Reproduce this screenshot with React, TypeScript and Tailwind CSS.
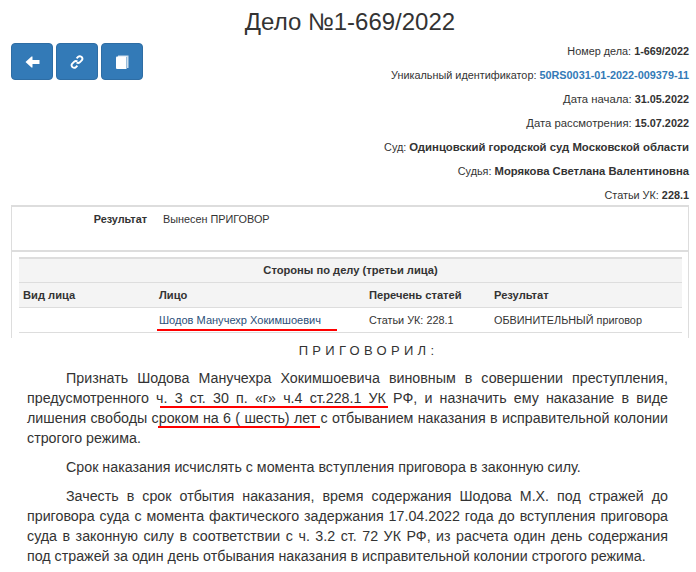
import React from "react";

const Info = ({ label, value, blue, labelClass, valueClass }: { label: string; value: string; blue?: boolean; labelClass?: string; valueClass?: string }) => (
  <div className="h-6 leading-6 text-right">
    <span className={labelClass}>{label}:</span> <b className={(blue ? "text-[#337ab7] " : "text-[#333] ") + (valueClass ?? "")}>{value}</b>
  </div>
);

const Btn = ({ children }: { children: React.ReactNode }) => (
  <div className="w-[42px] h-[37px] rounded bg-[#337ab7] border border-[#2e6da4] flex items-center justify-center text-white text-sm">
    {children}
  </div>
);

const Red = ({ className }: { className: string }) => (
  <div className={"absolute h-[2px] bg-[#f00] " + className} />
);

export default function App() {
  return (
    <div className="relative w-[696px] h-[572px] overflow-hidden bg-white text-[#333] font-['Liberation_Sans',Arial,sans-serif]">
      <h1 className="h-[43px] pt-[5px] pl-[4px] text-center text-2xl leading-[33px] font-normal">Дело №1-669/2022</h1>
      <div className="flex justify-between pl-[11px] pr-[7px] text-[10.85px] text-[#333]">
        <div className="flex gap-[3px] h-[37px]">
          <Btn>
            <svg width="15" height="14" viewBox="0 0 15 14" fill="#fff">
              <path d="M0.5 7 L6.5 1.5 L7.5 1.5 L7.5 5 L14.5 5 L14.5 9 L7.5 9 L7.5 12.5 L6.5 12.5 Z" />
            </svg>
          </Btn>
          <Btn>
            <svg width="14" height="14" viewBox="0 0 14 14" fill="none" stroke="#fff" strokeWidth="1.9">
              <path d="M6.6 3.4 L8.2 1.8 Q9.6 0.6 11.4 1.7 Q13.2 3.4 11.9 5.2 L9.8 7.3 Q8.2 8.6 6.6 7.4" />
              <path d="M7.4 10.6 L5.8 12.2 Q4.4 13.4 2.6 12.3 Q0.8 10.6 2.1 8.8 L4.2 6.7 Q5.8 5.4 7.4 6.6" />
            </svg>
          </Btn>
          <Btn>
            <svg width="14" height="14" viewBox="0 0 14 14">
              <path d="M3 0.5h10.5v12.5h-1.5v-11h-9z" fill="#cfdfee" />
              <path d="M1 2.5q0-1 1-1h9.5v12.5h-9.5q-1 0-1-1z" fill="#fff" />
            </svg>
          </Btn>
        </div>
        <div className="-mt-[4px]">
          <Info label="Номер дела" value="1-669/2022" />
          <Info label="Уникальный идентификатор" value="50RS0031-01-2022-009379-11" blue />
          <Info label="Дата начала" value="31.05.2022" labelClass="text-[11.3px]" />
          <Info label="Дата рассмотрения" value="15.07.2022" labelClass="text-[11.3px]" />
          <Info label="Суд" value="Одинцовский городской суд Московской области" valueClass="text-[11.35px]" />
          <Info label="Судья" value="Морякова Светлана Валентиновна" valueClass="text-[11.25px]" />
          <Info label="Статьи УК" value="228.1" />
        </div>
      </div>
      <div className="mx-[11px] w-[678px] h-[133px] -mt-[2px] border-x border-t-2 border-x-[#ddd] border-t-[#ddd] text-[10.85px] overflow-hidden">
        <div className="h-[45px] flex border-b-2 border-[#ddd] pt-[4px]">
          <b className="w-[135px] text-right">Результат</b>
          <span className="ml-[16px]">Вынесен ПРИГОВОР</span>
        </div>
        <div className="mx-[7px] mt-[5px] w-[663px] border-t-2 border-[#ddd]">
          <div className="h-[24px] bg-[#f4f4f4] border-b border-[#ddd] text-center font-bold text-[11.15px] leading-[22px]">Стороны по делу (третьи лица)</div>
          <div className="h-[25px] bg-[#f4f4f4] border-b border-[#ddd] flex font-bold text-[11.15px] leading-[24px]">
            <span className="w-[140px] pl-[4px]">Вид лица</span>
            <span className="w-[210px]">Лицо</span>
            <span className="w-[125px]">Перечень статей</span>
            <span>Результат</span>
          </div>
          <div className="h-[25px] border-b border-[#ddd] flex leading-[24px]">
            <span className="w-[140px]" />
            <span className="w-[210px] text-[11.05px] text-[#2b4f7a]">Шодов Манучехр Хокимшоевич</span>
            <span className="w-[125px]">Статьи УК: 228.1</span>
            <span>ОБВИНИТЕЛЬНЫЙ приговор</span>
          </div>
        </div>
      </div>
      <div className="w-[641px] ml-[27px] text-[14.25px] leading-[20px] text-[#333]">
        <p className="h-[30px] pt-[3px] pl-[42px] text-center tracking-[4.3px] leading-[20px] text-[13px]">ПРИГОВОРИЛ:</p>
        <p className="text-justify indent-[39px]">
          Признать Шодова Манучехра Хокимшоевича виновным в совершении преступления, предусмотренного ч. 3 ст. 30 п. «г» ч.4 ст.228.1 УК РФ, и назначить ему наказание в виде лишения свободы сроком на 6 ( шесть) лет с отбыванием наказания в исправительной колонии строгого режима.
        </p>
        <p className="mt-[9px] text-justify indent-[39px]">Срок наказания исчислять с момента вступления приговора в законную силу.</p>
        <p className="mt-[9px] text-justify indent-[39px]">
          Зачесть в срок отбытия наказания, время содержания Шодова М.Х. под стражей до приговора суда с момента фактического задержания 17.04.2022 года до вступления приговора суда в законную силу в соответствии с ч. 3.2 ст. 72 УК РФ, из расчета один день содержания под стражей за один день отбывания наказания в исправительной колонии строгого режима.
        </p>
      </div>
      <Red className="left-[157px] top-[329px] w-[180px]" />
      <Red className="left-[160px] top-[406px] w-[228px]" />
      <Red className="left-[158px] top-[426px] w-[162px]" />
    </div>
  );
}
